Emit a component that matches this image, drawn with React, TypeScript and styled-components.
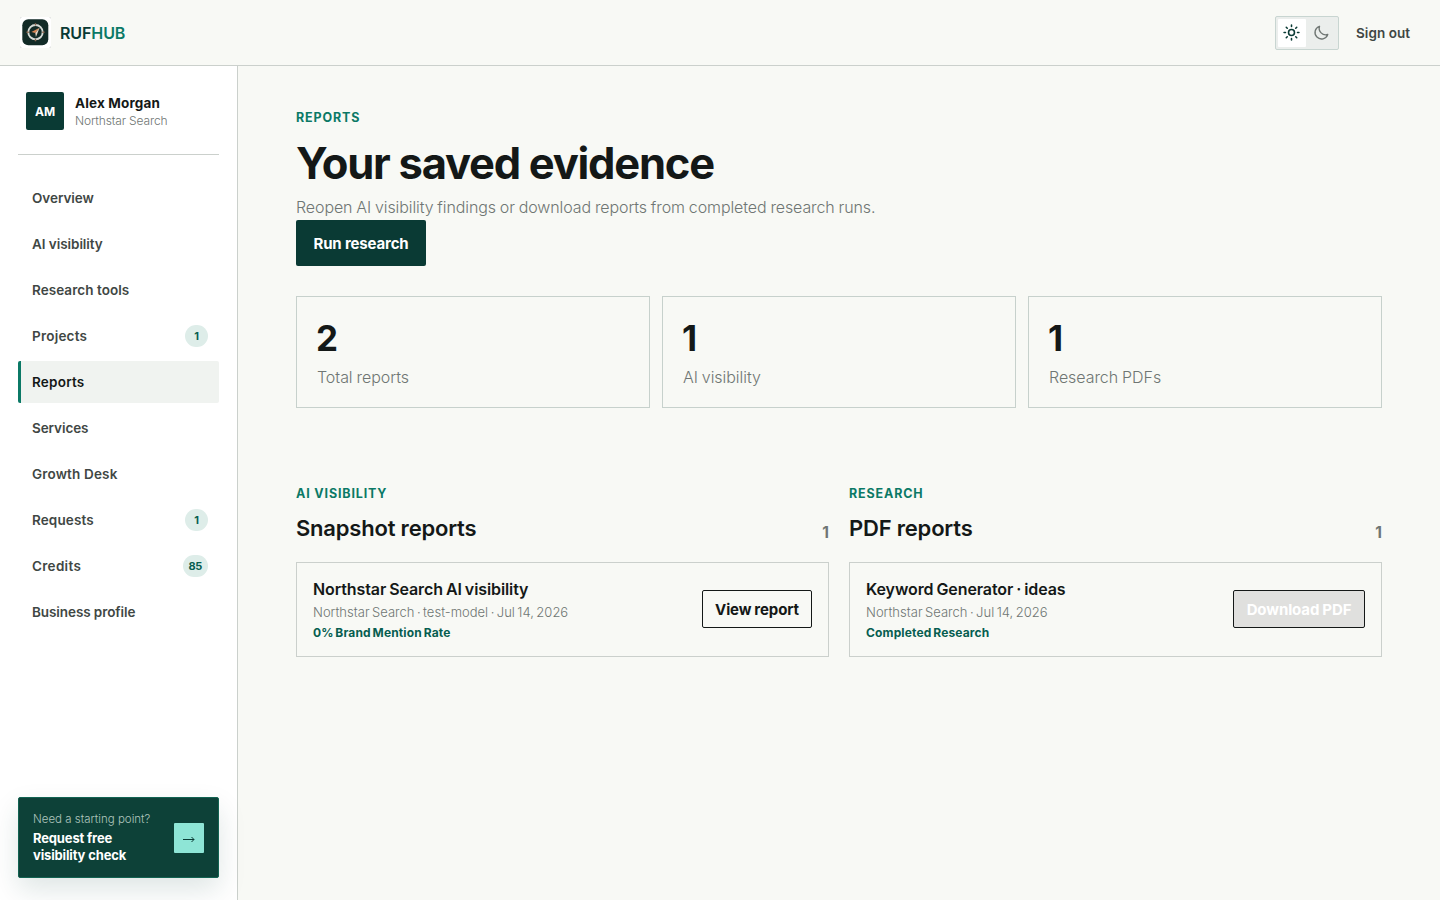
import styled, { createGlobalStyle, ThemeProvider } from 'styled-components'

const theme = {
  colors: {
    page: '#f8f9f5',
    panel: '#ffffff',
    line: '#cbd0cc',
    dark: '#141817',
    soft: '#3f4744',
    muted: '#6f7673',
    brand: '#0a3a34',
    accent: '#0b7966',
  },
}

const navItems = [
  { label: 'Overview', spacing: -0.05 },
  { label: 'AI visibility', spacing: -0.05 },
  { label: 'Research tools', spacing: 0.05 },
  { label: 'Projects', spacing: 0.22, count: 1 },
  { label: 'Reports', spacing: 0.22, active: true },
  { label: 'Services', spacing: -0.08 },
  { label: 'Growth Desk', spacing: 0.15 },
  { label: 'Requests', spacing: 0.12, count: 1 },
  { label: 'Credits', spacing: 0.3, count: 85 },
  { label: 'Business profile', spacing: -0.08 },
]

const stats = [
  { value: 2, label: 'Total reports' },
  { value: 1, label: 'AI visibility' },
  { value: 1, label: 'Research PDFs' },
]

const groups = [
  {
    eyebrow: 'AI visibility',
    title: 'Snapshot reports',
    name: 'Northstar Search AI visibility',
    meta: 'Northstar Search · test-model · Jul 14, 2026',
    status: '0% Brand Mention Rate',
    action: 'View report',
    width: 110,
  },
  {
    eyebrow: 'Research',
    title: 'PDF reports',
    name: 'Keyword Generator · ideas',
    meta: 'Northstar Search · Jul 14, 2026',
    status: 'Completed Research',
    action: 'Download PDF',
    width: 132,
    disabled: true,
  },
]

const Logo = () => (
  <LogoFrame>
    <svg width={'31'} height={'31'} viewBox={'0 0 31 31'} fill={'none'}>
      <rect width={'31'} height={'31'} fill={'#fff'} />
      <path d={'M0 1.5V0h1.5M29.5 0H31v1.5M31 29.5V31h-1.5M1.5 31H0v-1.5'} stroke={'#b9bdba'} />
      <rect x={'2.3'} y={'2.2'} width={'26'} height={'26'} rx={'6'} fill={'#122b27'} />
      <circle cx={'15.5'} cy={'15.2'} r={'7.2'} stroke={'#d5dad6'} strokeWidth={'1.9'} />
      <path
        d={'M15.5 6.2v2.3M15.5 22v2.3M6.5 15.2h2.3M22.2 15.2h2.3'}
        stroke={'#8e6a53'}
        strokeWidth={'1.4'}
      />
      <path d={'M19.6 10.7l-8.2 4.4 3.9 1z'} fill={'#d98755'} />
      <path d={'M19.6 10.7l-4.3 5.4.6 3.8z'} fill={'#e8d8c8'} />
    </svg>
  </LogoFrame>
)

const SunIcon = () => (
  <svg width={'17'} height={'17'} viewBox={'0 0 24 24'} fill={'none'} stroke={'currentColor'}
    strokeWidth={'2.2'} strokeLinecap={'round'}>
    <circle cx={'12'} cy={'12'} r={'4.2'} />
    <path d={'M12 1.5v2M12 20.5v2M1.5 12h2M20.5 12h2M4.6 4.6 6 6M18 18l1.4 1.4M4.6 19.4 6 18M18 6l1.4-1.4'} />
  </svg>
)

const MoonIcon = () => (
  <svg width={'17'} height={'17'} viewBox={'0 0 24 24'} fill={'none'} stroke={'currentColor'}
    strokeWidth={'1.9'} strokeLinecap={'round'} strokeLinejoin={'round'}>
    <path d={'M20.8 14.8A9.2 9.2 0 0 1 9.2 3.2 9.2 9.2 0 1 0 20.8 14.8Z'} />
  </svg>
)

const ArrowIcon = () => (
  <svg width={'12'} height={'8'} viewBox={'0 0 12 8'} fill={'none'} stroke={'currentColor'}>
    <path d={'M0 4.5h11M8.5 2l2.5 2.5L8.5 7'} />
  </svg>
)

const App = () => {
  return (
    <ThemeProvider theme={theme}>
      <GlobalStyle />
      <Page>
        <Header>
          <Brand>
            <Logo />
            <BrandName>
              RUF<span>HUB</span>
            </BrandName>
          </Brand>
          <HeaderActions>
            <ThemeSwitch>
              <ThemeOption $active aria-label={'Light theme'}>
                <SunIcon />
              </ThemeOption>
              <ThemeOption aria-label={'Dark theme'}>
                <MoonIcon />
              </ThemeOption>
            </ThemeSwitch>
            <SignOut>Sign out</SignOut>
          </HeaderActions>
        </Header>
        <Body>
          <Sidebar>
            <Profile>
              <Avatar>AM</Avatar>
              <div>
                <ProfileName>Alex Morgan</ProfileName>
                <Company>Northstar Search</Company>
              </div>
            </Profile>
            <Nav>
              {navItems.map(item => (
                <NavItem key={item.label} $active={item.active} $spacing={item.spacing}>
                  {item.label}
                  {item.count && <Badge>{item.count}</Badge>}
                </NavItem>
              ))}
            </Nav>
            <Promo>
              <div>
                <PromoHint>Need a starting point?</PromoHint>
                <PromoTitle>
                  Request free
                  <br />
                  visibility check
                </PromoTitle>
              </div>
              <PromoArrow>
                <ArrowIcon />
              </PromoArrow>
            </Promo>
          </Sidebar>
          <Main>
            <Eyebrow>Reports</Eyebrow>
            <Title>Your saved evidence</Title>
            <Lead>Reopen AI visibility findings or download reports from completed research runs.</Lead>
            <RunButton>Run research</RunButton>
            <Stats>
              {stats.map(stat => (
                <Stat key={stat.label}>
                  <StatValue>{stat.value}</StatValue>
                  <StatLabel>{stat.label}</StatLabel>
                </Stat>
              ))}
            </Stats>
            <Groups>
              {groups.map(group => (
                <section key={group.title}>
                  <Eyebrow>{group.eyebrow}</Eyebrow>
                  <GroupHead>
                    <GroupTitle>{group.title}</GroupTitle>
                    <GroupCount>1</GroupCount>
                  </GroupHead>
                  <Report>
                    <div>
                      <ReportName>{group.name}</ReportName>
                      <ReportMeta>{group.meta}</ReportMeta>
                      <ReportStatus>{group.status}</ReportStatus>
                    </div>
                    <ReportButton $width={group.width} disabled={group.disabled}>
                      {group.action}
                    </ReportButton>
                  </Report>
                </section>
              ))}
            </Groups>
          </Main>
        </Body>
      </Page>
    </ThemeProvider>
  )
}

export default App

const GlobalStyle = createGlobalStyle`
  * {
    box-sizing: border-box;
    margin: 0;
  }

  body {
    background: ${theme.colors.page};
    font-family: Inter, 'Liberation Sans', sans-serif;
    color: ${theme.colors.dark};
  }

  button {
    font-family: inherit;
    padding: 0;
    border: 0;
    background: none;
    white-space: nowrap;
  }
`

const Page = styled.div`
  height: 100vh;
  display: flex;
  flex-direction: column;
  overflow: hidden;
`

const Header = styled.header`
  height: 66px;
  flex-shrink: 0;
  display: flex;
  align-items: center;
  justify-content: space-between;
  padding: 0 30px 0 20px;
  border-bottom: 1px solid ${theme.colors.line};
`

const Brand = styled.div`
  display: flex;
  align-items: center;
  gap: 9px;
`

const LogoFrame = styled.div`
  width: 31px;
  height: 31px;
  border-radius: 2px;
  overflow: hidden;

  svg {
    display: block;
  }
`

const BrandName = styled.div`
  padding-top: 1px;
  font-size: 16px;
  line-height: 20px;
  font-weight: 600;
  letter-spacing: -0.1px;
  color: ${theme.colors.brand};

  span {
    color: ${theme.colors.accent};
  }
`

const HeaderActions = styled.div`
  display: flex;
  align-items: center;
  gap: 17px;
`

const ThemeSwitch = styled.div`
  display: flex;
  gap: 2px;
  width: 64px;
  height: 34px;
  padding: 2px;
  border: 1px solid #c8d5d1;
  border-radius: 2px;
  background: #ebeeec;
`

const ThemeOption = styled.button<{ $active?: boolean }>`
  width: 28px;
  height: 28px;
  display: flex;
  align-items: center;
  justify-content: center;
  padding-right: 2px;
  border-radius: 1px;
  background: ${props => (props.$active ? '#fff' : 'transparent')};
  color: ${props => (props.$active ? theme.colors.brand : theme.colors.muted)};
`

const SignOut = styled.button`
  width: 54px;
  font-size: 13.5px;
  line-height: 20px;
  font-weight: 600;
  letter-spacing: 0.05px;
  color: ${theme.colors.soft};
`

const Body = styled.div`
  flex: 1;
  display: flex;
`

const Sidebar = styled.aside`
  width: 238px;
  flex-shrink: 0;
  display: flex;
  flex-direction: column;
  padding: 0 18px 22px;
  border-right: 1px solid ${theme.colors.line};
  background: ${theme.colors.panel};
`

const Profile = styled.div`
  height: 89px;
  display: flex;
  align-items: flex-start;
  gap: 11px;
  padding: 26px 8px 0;
  border-bottom: 1px solid ${theme.colors.line};
`

const Avatar = styled.div`
  width: 38px;
  height: 38px;
  border-radius: 2px;
  background: ${theme.colors.brand};
  color: #fff;
  font-size: 12px;
  line-height: 39px;
  font-weight: 700;
  text-align: center;
`

const ProfileName = styled.div`
  padding-top: 1px;
  font-size: 13.5px;
  line-height: 20px;
  font-weight: 650;
  letter-spacing: 0.15px;
`

const Company = styled.div`
  font-size: 12px;
  line-height: 16px;
  font-weight: 350;
  letter-spacing: -0.14px;
  color: ${theme.colors.muted};
`

const Nav = styled.nav`
  flex: 1;
  display: flex;
  flex-direction: column;
  gap: 4px;
  padding-top: 22px;
`

const NavItem = styled.a<{ $active?: boolean; $spacing: number }>`
  height: 42px;
  display: flex;
  align-items: center;
  justify-content: space-between;
  padding: 0 11px;
  border-left: 3px solid ${props => (props.$active ? theme.colors.accent : 'transparent')};
  border-radius: 2px;
  background: ${props => (props.$active ? '#f0f3f0' : 'transparent')};
  color: ${props => (props.$active ? theme.colors.dark : theme.colors.soft)};
  font-size: 13.5px;
  font-weight: 600;
  letter-spacing: ${props => props.$spacing}px;
`

const Badge = styled.span`
  min-width: 23px;
  height: 22px;
  padding: 0 6px;
  border-radius: 11px;
  background: #deede9;
  color: #075e50;
  font-size: 11px;
  line-height: 22px;
  font-weight: 700;
  letter-spacing: -0.4px;
  text-align: center;
`

const Promo = styled.div`
  height: 81px;
  display: flex;
  align-items: center;
  justify-content: space-between;
  padding: 0 14px;
  border: 1px solid #126352;
  border-radius: 2px;
  background: #0d4138;
  color: #fff;
  box-shadow: 0 12px 28px rgba(10, 58, 52, 0.13);
`

const PromoHint = styled.div`
  font-size: 11.5px;
  line-height: 16px;
  font-weight: 350;
  letter-spacing: 0;
  color: #adc5bd;
`

const PromoTitle = styled.div`
  padding-top: 3px;
  font-size: 13px;
  line-height: 17px;
  font-weight: 700;
  letter-spacing: -0.15px;
`

const PromoArrow = styled.div`
  width: 30px;
  height: 30px;
  display: flex;
  align-items: center;
  justify-content: center;
  padding-top: 2px;
  border-radius: 1px;
  background: #8ee5d6;
  color: ${theme.colors.brand};
`

const Main = styled.main`
  flex: 1;
  padding: 42px 58px 0;
`

const Eyebrow = styled.div`
  font-size: 12.5px;
  line-height: 20px;
  font-weight: 650;
  letter-spacing: 0.85px;
  text-transform: uppercase;
  color: ${theme.colors.accent};
`

const Title = styled.h1`
  padding-top: 10px;
  font-size: 43.5px;
  line-height: 50px;
  font-weight: 700;
  letter-spacing: -1.25px;
`

const Lead = styled.p`
  padding-top: 7px;
  font-size: 16px;
  line-height: 25px;
  font-weight: 350;
  letter-spacing: -0.1px;
  word-spacing: -0.5px;
  color: ${theme.colors.muted};
`

const RunButton = styled.button`
  display: block;
  width: 130px;
  height: 46px;
  padding-top: 1px;
  border-radius: 2px;
  background: ${theme.colors.brand};
  color: #fff;
  font-size: 15px;
  line-height: 21px;
  font-weight: 650;
  letter-spacing: -0.15px;
`

const Stats = styled.div`
  display: grid;
  grid-template-columns: repeat(3, 1fr);
  gap: 12px;
  padding-top: 30px;
`

const Stat = styled.div`
  height: 112px;
  padding: 21px 20px 0 19px;
  border: 1px solid #c7d1cc;
`

const StatValue = styled.div`
  font-size: 35px;
  line-height: 40px;
  font-weight: 700;
  letter-spacing: -1px;
`

const StatLabel = styled.div`
  padding: 7px 0 0 1px;
  font-size: 16px;
  line-height: 24px;
  font-weight: 350;
  letter-spacing: -0.05px;
  word-spacing: -0.5px;
  color: ${theme.colors.muted};
`

const Groups = styled.div`
  display: grid;
  grid-template-columns: repeat(2, 1fr);
  gap: 20px;
  padding-top: 76px;
`

const GroupHead = styled.div`
  height: 58px;
  display: flex;
  align-items: flex-start;
  justify-content: space-between;
`

const GroupTitle = styled.h2`
  padding-top: 9px;
  font-size: 22px;
  line-height: 30px;
  font-weight: 600;
  letter-spacing: -0.2px;
`

const GroupCount = styled.span`
  padding-top: 19px;
  font-size: 15.5px;
  line-height: 20px;
  font-weight: 700;
  color: ${theme.colors.muted};
`

const Report = styled.article`
  height: 95px;
  display: flex;
  align-items: center;
  justify-content: space-between;
  padding: 0 16px;
  border: 1px solid ${theme.colors.line};
`

const ReportName = styled.h3`
  font-size: 16px;
  line-height: 24px;
  font-weight: 600;
  letter-spacing: -0.1px;
  word-spacing: -0.9px;
`

const ReportMeta = styled.div`
  padding-top: 1px;
  font-size: 13px;
  line-height: 21px;
  font-weight: 350;
  letter-spacing: 0.01px;
  word-spacing: -1.2px;
  color: ${theme.colors.muted};
`

const ReportStatus = styled.div`
  font-size: 12px;
  line-height: 20px;
  font-weight: 650;
  letter-spacing: 0.15px;
  word-spacing: -1.2px;
  color: #075e50;
`

const ReportButton = styled.button<{ $width: number }>`
  width: ${props => props.$width}px;
  height: 38px;
  margin-bottom: 1px;
  border: 1px solid ${theme.colors.dark};
  border-radius: 2px;
  font-size: 15px;
  font-weight: 650;
  letter-spacing: -0.1px;
  word-spacing: -0.5px;
  color: ${theme.colors.dark};

  &:disabled {
    background: #e0e0de;
    color: #fff;
  }
`
